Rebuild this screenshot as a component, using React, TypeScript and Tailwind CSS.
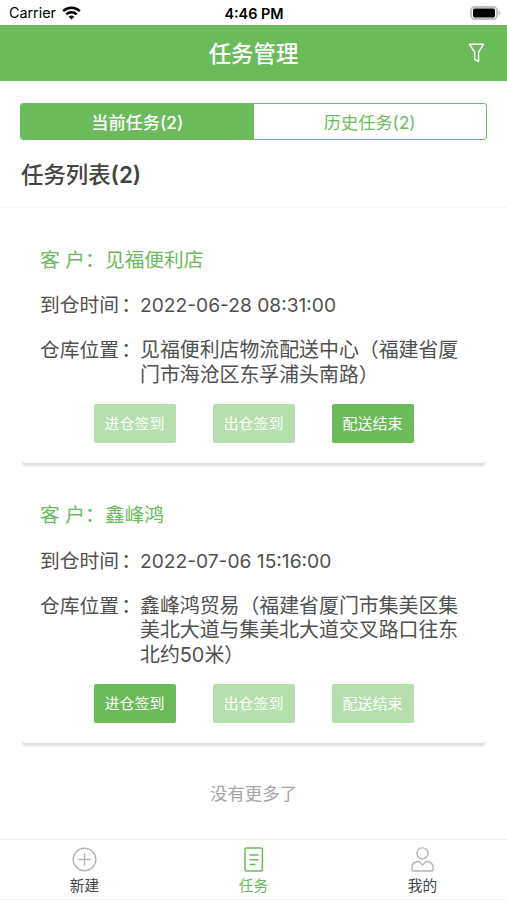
import clsx from "clsx";

type Task = {
	customer: string;
	time: string;
	address: string[];
	active: string;
};

const ACTIONS = ["进仓签到", "出仓签到", "配送结束"];

const TASKS: Task[] = [
	{
		customer: "见福便利店",
		time: "2022-06-28 08:31:00",
		address: ["见福便利店物流配送中心（福建省厦", "门市海沧区东孚浦头南路）"],
		active: "配送结束",
	},
	{
		customer: "鑫峰鸿",
		time: "2022-07-06 15:16:00",
		address: ["鑫峰鸿贸易（福建省厦门市集美区集", "美北大道与集美北大道交叉路口往东", "北约50米）"],
		active: "进仓签到",
	},
];

function StatusBar() {
	return (
		<div className="h-[25px] grid grid-cols-3 items-center pl-[9px] pr-[6px] pt-[2px] text-black">
			<div className="flex items-center gap-[6px] text-[14.3px] leading-none">
				<span>Carrier</span>
				<svg width="19" height="14" viewBox="0 0 19 14" fill="none" stroke="currentColor" strokeWidth="2.5">
					<path d="M1.2 5.2a12 12 0 0 1 16.6 0" />
					<path d="M4.3 8.3a7.5 7.5 0 0 1 10.4 0" />
					<path d="M9.5 13.6 6.7 10.8a4 4 0 0 1 5.6 0Z" fill="currentColor" stroke="none" />
				</svg>
			</div>
			<div className="-ml-[2px] pt-px text-center text-[14.4px] leading-none font-semibold">4:46 PM</div>
			<svg className="-mt-px justify-self-end" width="31" height="14" viewBox="0 0 31 14">
				<rect x="1" y="1" width="26" height="12" rx="3.6" fill="#fff" stroke="#bdbdbd" strokeWidth="1.8" />
				<rect x="3" y="2.6" width="22" height="8.8" rx="1.6" fill="#000" />
				<path d="M28.6 4.4v5.2a2.8 2.8 0 0 0 0-5.2Z" fill="#b5b5b5" />
			</svg>
		</div>
	);
}

function Header() {
	return (
		<header className="h-14 grid grid-cols-[1fr_auto_1fr] items-center bg-[#6bbb5b] text-white">
			<h1 className="col-start-2 pt-[2px] text-[22.4px] leading-none font-medium">任务管理</h1>
			<svg
				className="justify-self-end mr-[22px]"
				width="17"
				height="20"
				viewBox="0 0 17 20"
				fill="none"
				stroke="currentColor"
				strokeWidth="1.4"
				strokeLinejoin="round"
			>
				<path d="M1.5 1.3h14L10.6 9v9.6L6.6 16.3V9Z" />
			</svg>
		</header>
	);
}

function Label({ text }: { text: string }) {
	return (
		<span className="w-[100px] shrink-0 whitespace-nowrap text-[19.8px]">
			{text}
			<span className="ml-[2px]">：</span>
		</span>
	);
}

function TaskCard({ task }: { task: Task }) {
	return (
		<section className="mx-5 px-[20px] pb-5 rounded-[5px] shadow-[0_5px_3px_-2px_#dedede] text-[20px] leading-[24.4px] text-[#505050]">
			<div className="flex text-[19.7px] text-[#6bbb5b]">
				<span className="w-[65px] whitespace-nowrap">客 户：</span>
				<span>{task.customer}</span>
			</div>
			<div className="flex mt-[21px]">
				<Label text="到仓时间" />
				<span className="text-[19.2px]">{task.time}</span>
			</div>
			<div className="flex mt-[21px]">
				<Label text="仓库位置" />
				<div className="whitespace-nowrap text-[19.9px]">
					{task.address.map((line) => (
						<p key={line}>{line}</p>
					))}
				</div>
			</div>
			<div className="flex justify-center gap-[37px] mt-[16.5px]">
				{ACTIONS.map((action) => (
					<button
						key={action}
						className={clsx(
							"w-[82px] h-[39px] rounded-[2px] text-[15px] leading-none text-white",
							action === task.active ? "bg-[#6bbb5b]" : "bg-[#b5dfad]"
						)}
					>
						{action}
					</button>
				))}
			</div>
		</section>
	);
}

function TabBar() {
	return (
		<nav className="h-[61px] mt-auto grid grid-cols-3 border-y border-[#f1f1f1] text-[14.7px] leading-none text-[#444]">
			<a href="#" className="flex flex-col items-center pt-[7px] gap-[7px]">
				<svg width="25" height="25" viewBox="0 0 25 25" fill="none" stroke="#b4b4b4" strokeWidth="1.4">
					<circle cx="12.5" cy="12.5" r="11.3" />
					<path d="M6.2 12.5h12.6M12.5 6.2v12.6" />
				</svg>
				新建
			</a>
			<a href="#" className="flex flex-col items-center pt-[7px] gap-[7px] text-[#6bbb5b]">
				<svg width="25" height="25" viewBox="0 0 25 25" fill="none" stroke="currentColor" strokeWidth="1.5">
					<rect x="4" y="1" width="17.4" height="23" rx="1.5" />
					<path d="M8.5 8h9M8.5 12.8h9M8.5 17.5h6" />
				</svg>
				任务
			</a>
			<a href="#" className="flex flex-col items-center pt-[7px] gap-[7px]">
				<svg width="25" height="25" viewBox="0 0 25 25" fill="none" stroke="#b4b4b4" strokeWidth="1.4" strokeLinejoin="round">
					<circle cx="12.5" cy="6.4" r="5.5" />
					<path d="M9 14.5 12.5 18l3.5-3.5c4 .3 7 2 7 5.5v2.5q0 1.500-1.500 1.500h-18q-1.500 0-1.500-1.500V20c0-3.500 3-5.200 7-5.500Z" />
				</svg>
				我的
			</a>
		</nav>
	);
}

export default function App() {
	return (
		<div className="w-[507px] h-[900px] flex flex-col overflow-hidden bg-white font-['Inter','Noto_Sans_CJK_SC',sans-serif]">
			<StatusBar />
			<Header />
			<div className="mx-5 mt-[22px] h-[37px] shrink-0 grid grid-cols-2 border border-[#6bbb5b] rounded-[3px] overflow-hidden text-[17.2px] leading-none">
				<button className="pt-[2px] bg-[#6bbb5b] text-white font-medium">当前任务(2)</button>
				<button className="pt-[2px] text-[#6bbb5b]">历史任务(2)</button>
			</div>
			<h2 className="h-[68px] shrink-0 px-[21px] border-b-2 border-[#f6f6f6] text-[22.4px] leading-[70px] text-[#444] font-medium">
				任务列表<span className="font-semibold">(2)</span>
			</h2>
			<div className="flex flex-col gap-[40.5px] pt-[39.5px]">
				{TASKS.map((task) => (
					<TaskCard key={task.customer} task={task} />
				))}
			</div>
			<p className="mt-[42px] text-center text-[17.4px] leading-[18px] text-[#a5a5a5]">没有更多了</p>
			<TabBar />
		</div>
	);
}
